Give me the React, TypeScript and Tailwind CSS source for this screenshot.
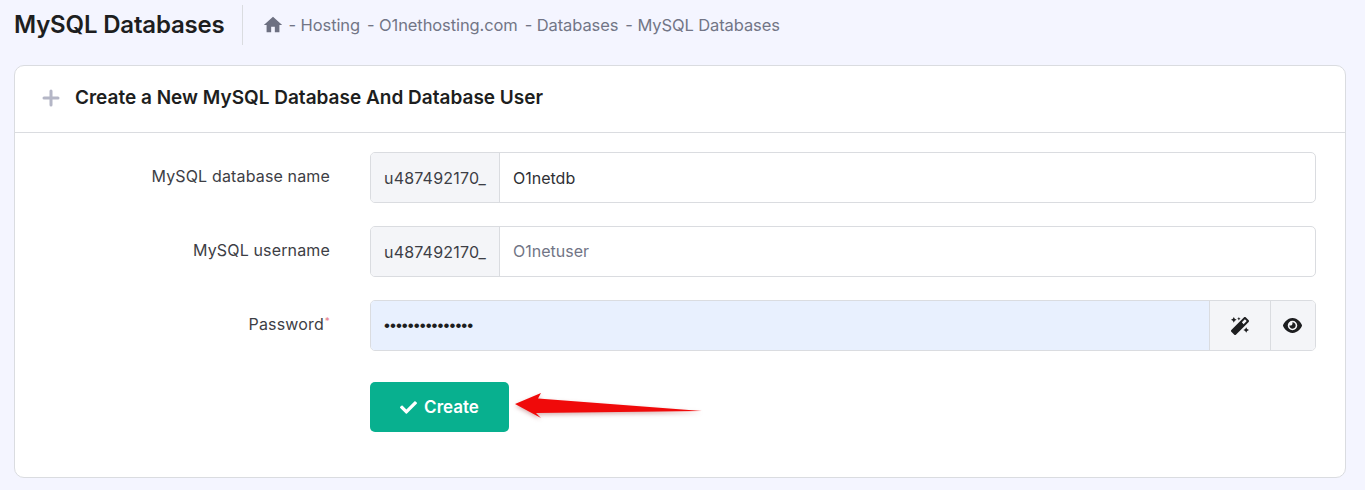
import { FaCheck, FaMagic } from "react-icons/fa";
import { FaEye } from "react-icons/fa6";
import { MdHome } from "react-icons/md";
import { Plus } from "lucide-react";

const CRUMBS = ["Hosting", "O1nethosting.com", "Databases", "MySQL Databases"];

function Field({ label, required, children }: { label: string; required?: boolean; children: React.ReactNode }) {
  return (
    <div className="flex items-center">
      <div className="w-[315px] shrink-0 pb-[3px] text-right text-[16px] tracking-[0.15px] text-[#3d3e45]">
        {label}
        {required && <sup className="ml-px text-[10px] text-[#e8808c]">*</sup>}
      </div>
      <div className="ml-[40px] flex h-[51px] flex-1 overflow-hidden rounded-[5px] border border-[#dadce0]">
        {children}
      </div>
    </div>
  );
}

function Prefix() {
  return (
    <div className="flex w-[129px] shrink-0 items-center justify-center border-r border-[#dadce0] bg-[#f4f5f8] text-[16px] tracking-[0.2px] text-[#3d3e45]">
      u487492170_
    </div>
  );
}

export default function App() {
  return (
    <div className="relative h-[490px] overflow-hidden bg-[#f4f5ff] font-['Inter',sans-serif]">
      <header className="flex h-[51px] items-center pb-[1px] pl-[14px]">
        <h1 className="text-[24px] font-semibold tracking-[-0.18px] text-[#1d1e20]">MySQL Databases</h1>
        <div className="ml-[17px] h-[40px] w-px bg-[#dadce0]" />
        <MdHome className="ml-[19px] text-[#6d7081]" size={22} />
        <nav className="flex text-[16.5px] tracking-[-0.1px] text-[#727586]">
          {CRUMBS.map((crumb, i) => (
            <span key={crumb} className={i === 0 ? "ml-[5px]" : "ml-[7px]"}>
              - {crumb}
            </span>
          ))}
        </nav>
      </header>

      <section className="mx-[14px] mt-[14px] h-[413px] w-[1332px] rounded-[10px] border border-[#dadce0] bg-white">
        <div className="flex h-[67px] items-center border-b border-[#dadce0] pb-[2px] pl-[24px]">
          <Plus className="text-[#b4b6c6]" size={24} strokeWidth={3} />
          <h2 className="ml-[12px] text-[19px] font-semibold text-[#1d1e20]">
            Create a New MySQL Database And Database User
          </h2>
        </div>

        <div className="flex flex-col gap-[23px] pr-[29px] pt-[19px]">
          <Field label="MySQL database name">
            <Prefix />
            <div className="flex flex-1 items-center pl-[13px] text-[16px] text-[#2f3035]">O1netdb</div>
          </Field>
          <Field label="MySQL username">
            <Prefix />
            <div className="flex flex-1 items-center pb-[1px] pl-[13px] text-[16px] text-[#727586]">O1netuser</div>
          </Field>
          <Field label="Password" required>
            <div className="flex flex-1 items-center bg-[#e8f0fe] pl-[13px] font-['Liberation_Sans',sans-serif] text-[17px] text-[#1d1e20]">
              •••••••••••••••
            </div>
            <div className="flex w-[61px] items-center justify-center border-l border-[#dadce0] bg-[#f4f5f8] text-[#1d1e20]">
              <FaMagic size={18} />
            </div>
            <div className="flex w-[45px] items-center justify-center border-l border-[#dadce0] bg-[#f4f5f8] pr-[2px] text-[#1d1e20]">
              <FaEye size={19} />
            </div>
          </Field>
          <div className="ml-[355px] mt-[8px]">
            <button className="flex h-[50px] w-[139px] items-center justify-center gap-[7px] rounded-[5px] bg-[#08b08f] pt-[1px] text-[17px] font-semibold text-white">
              <FaCheck size={17} />
              Create
            </button>
          </div>
        </div>
      </section>

      <svg className="absolute left-[510px] top-[385px] drop-shadow-[0_2px_2px_rgba(120,0,0,0.3)]" width="200" height="40" viewBox="0 0 200 40">
        <path d="M5 19 L31 8 L28 13.5 L192 26 L26 28 L31 33 Z" fill="#f00a0a" />
      </svg>
    </div>
  );
}
